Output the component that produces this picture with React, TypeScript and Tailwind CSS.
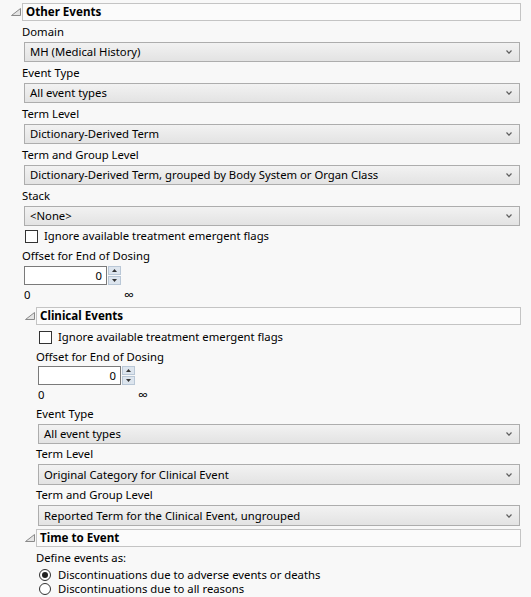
import React from 'react';

const font = { fontFamily: '"Segoe UI", "Noto Sans", "Open Sans", sans-serif' };

function Triangle() {
    return (
        <svg width="10" height="8" viewBox="0 0 10 8" className="shrink-0">
            <path d="M0.5 7.5 L9.5 0.5 L9.5 7.5 Z" fill="#e4e4e4" stroke="#8a8a8a" strokeWidth="1" />
        </svg>
    );
}

function SectionHeader({ title, indent }: { title: string; indent: boolean }) {
    return (
        <div className={indent ? 'flex items-center h-[18px] pl-[25px]' : 'flex items-center h-[18px] pl-[11px]'}>
            <Triangle />
            <div className="ml-px flex-1 mr-[10px] h-[18px] border border-[#c4c4c4] bg-[#fbfbfb] flex items-center pl-[3px] text-[11.6px] leading-[16px] font-bold text-black">
                {title}
            </div>
        </div>
    );
}

function Label({ text, h = 'h-[21px]' }: { text: string; h?: string }) {
    return <div className={`${h} flex items-center text-[11.3px] leading-[16px] text-black`}>{text}</div>;
}

function Dropdown({ value, h = 'h-[20px]' }: { value: string; h?: string }) {
    return (
        <div className={`${h} ml-[2px] mr-[11px] border border-[#adadad] bg-gradient-to-b from-[#f2f2f2] to-[#e3e3e3] flex items-center justify-between pl-[5px] pr-[7px] text-[11.3px] leading-[16px] text-black`}>
            <span>{value}</span>
            <svg width="6" height="4" viewBox="0 0 6 4">
                <path d="M0.5 0.5 L3 3.2 L5.5 0.5" fill="none" stroke="#606060" strokeWidth="1.2" />
            </svg>
        </div>
    );
}

function Checkbox({ label }: { label: string }) {
    return (
        <div className="flex items-center h-[20px] text-[11.3px] leading-[16px] text-black">
            <div className="ml-[3px] w-[13px] h-[13px] border border-[#333] bg-white" />
            <span className="ml-[6px]">{label}</span>
        </div>
    );
}

function NumberBox() {
    return (
        <div className="flex items-center h-[19px] ml-[2px]">
            <div className="w-[83px] h-[19px] border border-[#7a7a7a] bg-white flex items-center justify-end pr-[4px] text-[11.3px] leading-[16px] text-black">0</div>
            <div className="ml-px flex flex-col gap-px">
                <div className="w-[13px] h-[9px] bg-[#dde5ee] border border-[#b9c7d6] flex items-center justify-center">
                    <svg width="5" height="3" viewBox="0 0 5 3"><path d="M0 3 L2.5 0 L5 3 Z" fill="#333" /></svg>
                </div>
                <div className="w-[13px] h-[9px] bg-[#dde5ee] border border-[#b9c7d6] flex items-center justify-center">
                    <svg width="5" height="3" viewBox="0 0 5 3"><path d="M0 0 L2.5 3 L5 0 Z" fill="#333" /></svg>
                </div>
            </div>
        </div>
    );
}

function Range() {
    return (
        <div className="flex items-center h-[19px] text-[11.3px] leading-[16px] text-black">
            <span className="ml-[2px] w-[100px]">0</span>
            <span className="text-[14px]">∞</span>
        </div>
    );
}

function Radio({ label, checked }: { label: string; checked: boolean }) {
    return (
        <div className="flex items-center h-[14px] text-[11.3px] leading-[14px] text-black">
            <div className="ml-[3px] w-[12px] h-[12px] rounded-full border border-[#333] bg-white flex items-center justify-center">
                {checked && <div className="w-[6px] h-[6px] rounded-full bg-[#222]" />}
            </div>
            <span className="ml-[7px]">{label}</span>
        </div>
    );
}

export default function App() {
    return (
        <div className="w-[531px] h-[597px] bg-[#f8f8f8] overflow-hidden pt-[3px]" style={font}>
            <SectionHeader title="Other Events" indent={false} />
            <div className="pl-[22px]">
                <Label text="Domain" />
                <Dropdown value="MH (Medical History)" />
                <Label text="Event Type" />
                <Dropdown value="All event types" />
                <Label text="Term Level" />
                <Dropdown value="Dictionary-Derived Term" />
                <Label text="Term and Group Level" />
                <Dropdown value="Dictionary-Derived Term, grouped by Body System or Organ Class" />
                <Label text="Stack" />
                <Dropdown value="<None>" />
                <Checkbox label="Ignore available treatment emergent flags" />
                <Label text="Offset for End of Dosing" h="h-[20px]" />
                <NumberBox />
                <Range />
            </div>
            <div className="h-[3px]" />
            <SectionHeader title="Clinical Events" indent={true} />
            <div className="pl-[36px]">
                <div className="h-[2px]" />
                <Checkbox label="Ignore available treatment emergent flags" />
                <Label text="Offset for End of Dosing" h="h-[19px]" />
                <NumberBox />
                <Range />
                <Label text="Event Type" h="h-[20px]" />
                <Dropdown value="All event types" />
                <Label text="Term Level" h="h-[20px]" />
                <Dropdown value="Original Category for Clinical Event" h="h-[21px]" />
                <Label text="Term and Group Level" h="h-[20px]" />
                <Dropdown value="Reported Term for the Clinical Event, ungrouped" h="h-[21px]" />
            </div>
            <div className="h-[3px]" />
            <SectionHeader title="Time to Event" indent={true} />
            <div className="pl-[36px]">
                <Label text="Define events as:" h="h-[21px]" />
                <Radio label="Discontinuations due to adverse events or deaths" checked={true} />
                <Radio label="Discontinuations due to all reasons" checked={false} />
            </div>
        </div>
    );
}
